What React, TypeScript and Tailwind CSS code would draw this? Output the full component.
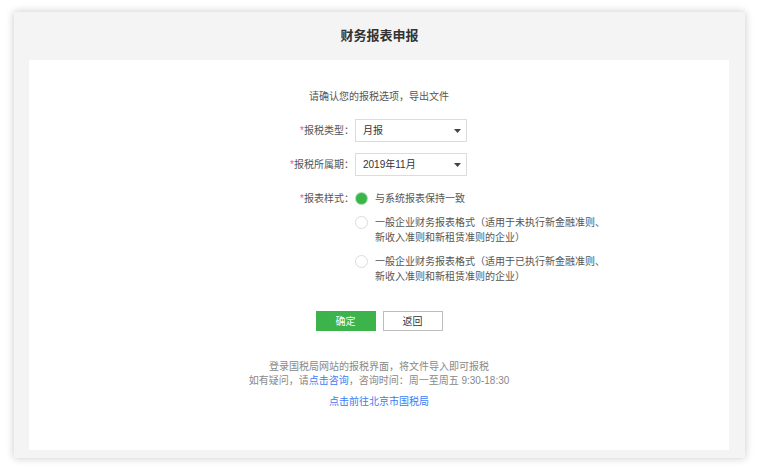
import React from "react";

const font = { fontFamily: '"Liberation Sans", "Noto Sans CJK SC", sans-serif' };

function Caret() {
  return (
    <svg width="7" height="4" viewBox="0 0 7 4" className="shrink-0">
      <path d="M0 0h7L3.5 4z" fill="#444" />
    </svg>
  );
}

function Select({ value }: { value: string }) {
  return (
    <div className="flex h-[23px] w-[112px] items-center justify-between border border-[#dcdcdc] bg-white pl-[7px] pr-[5px] text-[10px] text-[#333]">
      <span>{value}</span>
      <Caret />
    </div>
  );
}

function Label({ text }: { text: string }) {
  return (
    <div className="w-[100px] shrink-0 pr-[1px] text-right text-[10px] leading-[15px] text-[#555]">
      <span className="text-[#f55]">*</span>
      {text}
    </div>
  );
}

function Radio({ checked, lines }: { checked?: boolean; lines: string[] }) {
  return (
    <div className="flex items-start gap-[7px]">
      <div className="mt-[1px] flex h-[13px] w-[13px] shrink-0 items-center justify-center">
        {checked ? (
          <div className="flex h-[13px] w-[13px] items-center justify-center rounded-full bg-[#a9dcae]">
            <div className="h-[11px] w-[11px] rounded-full bg-[#3bb54a]" />
          </div>
        ) : (
          <div className="h-[13px] w-[13px] rounded-full border border-[#dcdcdc] bg-white" />
        )}
      </div>
      <div className="text-[10px] leading-[15px] text-[#555]">
        {lines.map((l) => (
          <div key={l}>{l}</div>
        ))}
      </div>
    </div>
  );
}

export default function App() {
  return (
    <div className="h-[469px] w-full bg-white pl-[14px] pt-[12px]" style={font}>
      <div className="flex h-[446px] w-[731px] flex-col bg-[#f4f4f4] shadow-[0_0_8px_rgba(0,0,0,0.22)]">
        <div className="flex h-[48px] shrink-0 items-center justify-center text-[13px] font-bold text-[#333]">
          财务报表申报
        </div>
        <div className="ml-[15px] mr-[16px] flex h-[390px] flex-col bg-white pt-[30px]">
          <div className="text-center text-[10px] leading-[14px] text-[#555]">
            请确认您的报税选项，导出文件
          </div>

          <div className="ml-[226px] mt-[15px] flex flex-col">
            <div className="flex items-center">
              <Label text="报税类型：" />
              <Select value="月报" />
            </div>
            <div className="mt-[11px] flex items-center">
              <Label text="报税所属期：" />
              <Select value="2019年11月" />
            </div>
            <div className="mt-[15px] flex items-start">
              <Label text="报表样式：" />
              <div className="flex flex-col gap-[9px]">
                <Radio checked lines={["与系统报表保持一致"]} />
                <Radio lines={["一般企业财务报表格式（适用于未执行新金融准则、", "新收入准则和新租赁准则的企业）"]} />
                <Radio lines={["一般企业财务报表格式（适用于已执行新金融准则、", "新收入准则和新租赁准则的企业）"]} />
              </div>
            </div>
          </div>

          <div className="mt-[27px] flex justify-center gap-[7px]">
            <button className="h-[20px] w-[60px] bg-[#3db44b] text-[10px] text-white">确定</button>
            <button className="h-[20px] w-[60px] border border-[#bdbdbd] bg-white text-[10px] text-[#333]">返回</button>
          </div>

          <div className="mt-[29px] text-center text-[10px] leading-[14px] text-[#888]">
            <div>登录国税局网站的报税界面，将文件导入即可报税</div>
            <div>
              如有疑问，请<span className="text-[#3b7cf5]">点击咨询</span>，咨询时间：周一至周五 9:30-18:30
            </div>
            <div className="mt-[7px] text-[#3b7cf5]">点击前往北京市国税局</div>
          </div>
        </div>
      </div>
    </div>
  );
}
